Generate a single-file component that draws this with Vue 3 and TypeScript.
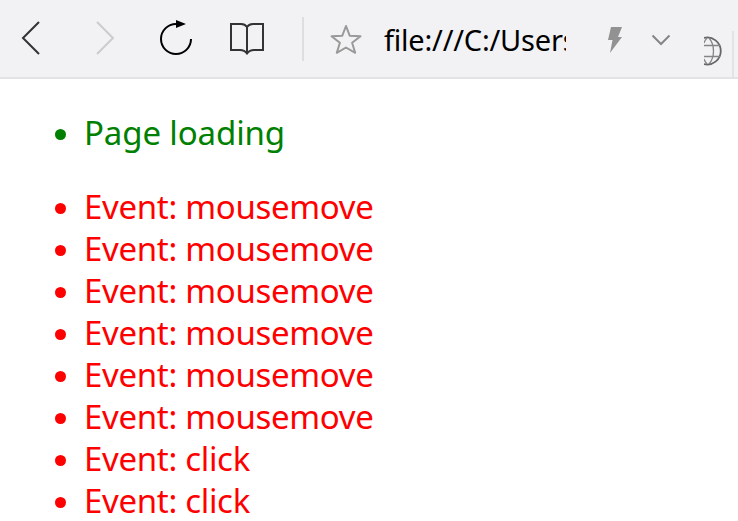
<script setup lang="ts">
const messages: string[] = ['Page loading']
const events: string[] = [
  'mousemove',
  'mousemove',
  'mousemove',
  'mousemove',
  'mousemove',
  'mousemove',
  'click',
  'click',
]
</script>

<template>
  <div class="browser">
    <header class="toolbar">
      <svg class="icon back" viewBox="0 0 20 36"><path d="M18 2 2 18 18 34" /></svg>
      <svg class="icon forward" viewBox="0 0 20 36"><path d="M2 2 18 18 2 34" /></svg>
      <svg class="icon reload" viewBox="0 0 34 38">
        <path d="M32 20A15 15 0 1 1 17 5H20" />
        <path class="head" d="M17 1 27 5 17 9Z" />
      </svg>
      <svg class="icon book" viewBox="0 0 36 38">
        <path d="M18 8V34M18 8Q16 5 12 5H2V31H11Q15.500 31 18 34.500Q20.500 31 25 31H34V5H24Q20 5 18 8" />
      </svg>
      <span class="divider"></span>
      <svg class="icon star" viewBox="0 0 34 32">
        <path d="M17 3 20.700 12.700 31.500 13.300 23.100 19.700 26.200 29.800 17 24.500 7.800 29.800 10.900 19.700 2.500 13.300 13.300 12.700Z" />
      </svg>
      <div class="address">file:///C:/Users</div>
      <svg class="icon bolt" viewBox="0 0 16 28"><path d="M4 1H15L11 11H15L3 27 5.500 14H1Z" /></svg>
      <svg class="icon chevron" viewBox="0 0 20 12"><path d="M1.500 1.500 10 10 18.500 1.500" /></svg>
      <svg class="icon globe" viewBox="0 0 20 30">
        <path class="rim" d="M0 1.900A13.500 13.500 0 1 1 0 28.100" />
        <path d="M0 9.500H16M0 20.500H16M5 2Q9.500 7 9.500 15T5 28M3 2Q1 4 0 7M0 23Q1 26 3 28" />
      </svg>
      <span class="tab-edge"></span>
    </header>
    <main class="page">
      <ul class="log loading">
        <li v-for="(message, i) in messages" :key="i"><span>{{ message }}</span></li>
      </ul>
      <ul class="log events">
        <li v-for="(name, i) in events" :key="i"><span>Event: {{ name }}</span></li>
      </ul>
    </main>
  </div>
</template>

<style>
body {
  margin: 0;
  overflow: hidden;
  background: #fff;
}
</style>

<style scoped>
.browser {
  width: 738px;
  height: 521px;
  overflow: hidden;
  font-family: 'Noto Sans', 'Open Sans', sans-serif;
}
.toolbar {
  box-sizing: border-box;
  display: flex;
  align-items: flex-start;
  height: 79px;
  border-bottom: 2px solid #e3e3e5;
  background: #f2f2f4;
}
.icon {
  flex: none;
  fill: none;
  stroke: #333;
  stroke-width: 2;
}
.back {
  width: 20px;
  height: 36px;
  margin: 20px 0 0 21px;
}
.forward {
  width: 20px;
  height: 36px;
  margin: 20px 0 0 54px;
  stroke: #ccc;
}
.reload {
  width: 34px;
  height: 38px;
  margin: 19px 0 0 44px;
  stroke: #000;
}
.reload .head {
  fill: #000;
  stroke: none;
}
.book {
  width: 36px;
  height: 38px;
  margin: 19px 0 0 36px;
}
.divider {
  flex: none;
  width: 2px;
  height: 44px;
  margin: 17px 0 0 37px;
  background: #dedee0;
}
.star {
  width: 34px;
  height: 32px;
  margin: 23px 0 0 25px;
  stroke: #999;
  stroke-linejoin: round;
}
.address {
  flex: none;
  width: 182px;
  height: 40px;
  margin: 20px 0 0 21px;
  overflow: hidden;
  color: #000;
  font-size: 29px;
  line-height: 40px;
  letter-spacing: -0.2px;
  white-space: nowrap;
}
.bolt {
  width: 16px;
  height: 28px;
  margin: 26px 0 0 41px;
  fill: #929292;
  stroke: none;
}
.chevron {
  width: 20px;
  height: 12px;
  margin: 34px 0 0 28px;
  stroke: #858587;
}
.globe {
  width: 20px;
  height: 30px;
  margin: 36px 0 0 33px;
  stroke: #858587;
  stroke-width: 1.300;
}
.globe .rim {
  stroke: #666;
  stroke-width: 1.800;
}
.tab-edge {
  width: 2px;
  height: 46px;
  margin: 31px 0 0 8px;
  background: #e3e3e5;
}
.page {
  padding: 33px 0 0 55px;
}
.log {
  margin: 0 0 32px;
  padding: 0;
  list-style: none;
  font-size: 33px;
  line-height: 42px;
}
.log li {
  display: flex;
  align-items: center;
  height: 42px;
  white-space: nowrap;
}
.log li::before {
  content: '';
  width: 11px;
  height: 11px;
  margin: 2px 18px 0 0;
  border-radius: 50%;
  background: currentColor;
}
.loading {
  color: #008000;
  letter-spacing: -0.12px;
}
.events {
  color: #f00;
  letter-spacing: -0.32px;
}
</style>
